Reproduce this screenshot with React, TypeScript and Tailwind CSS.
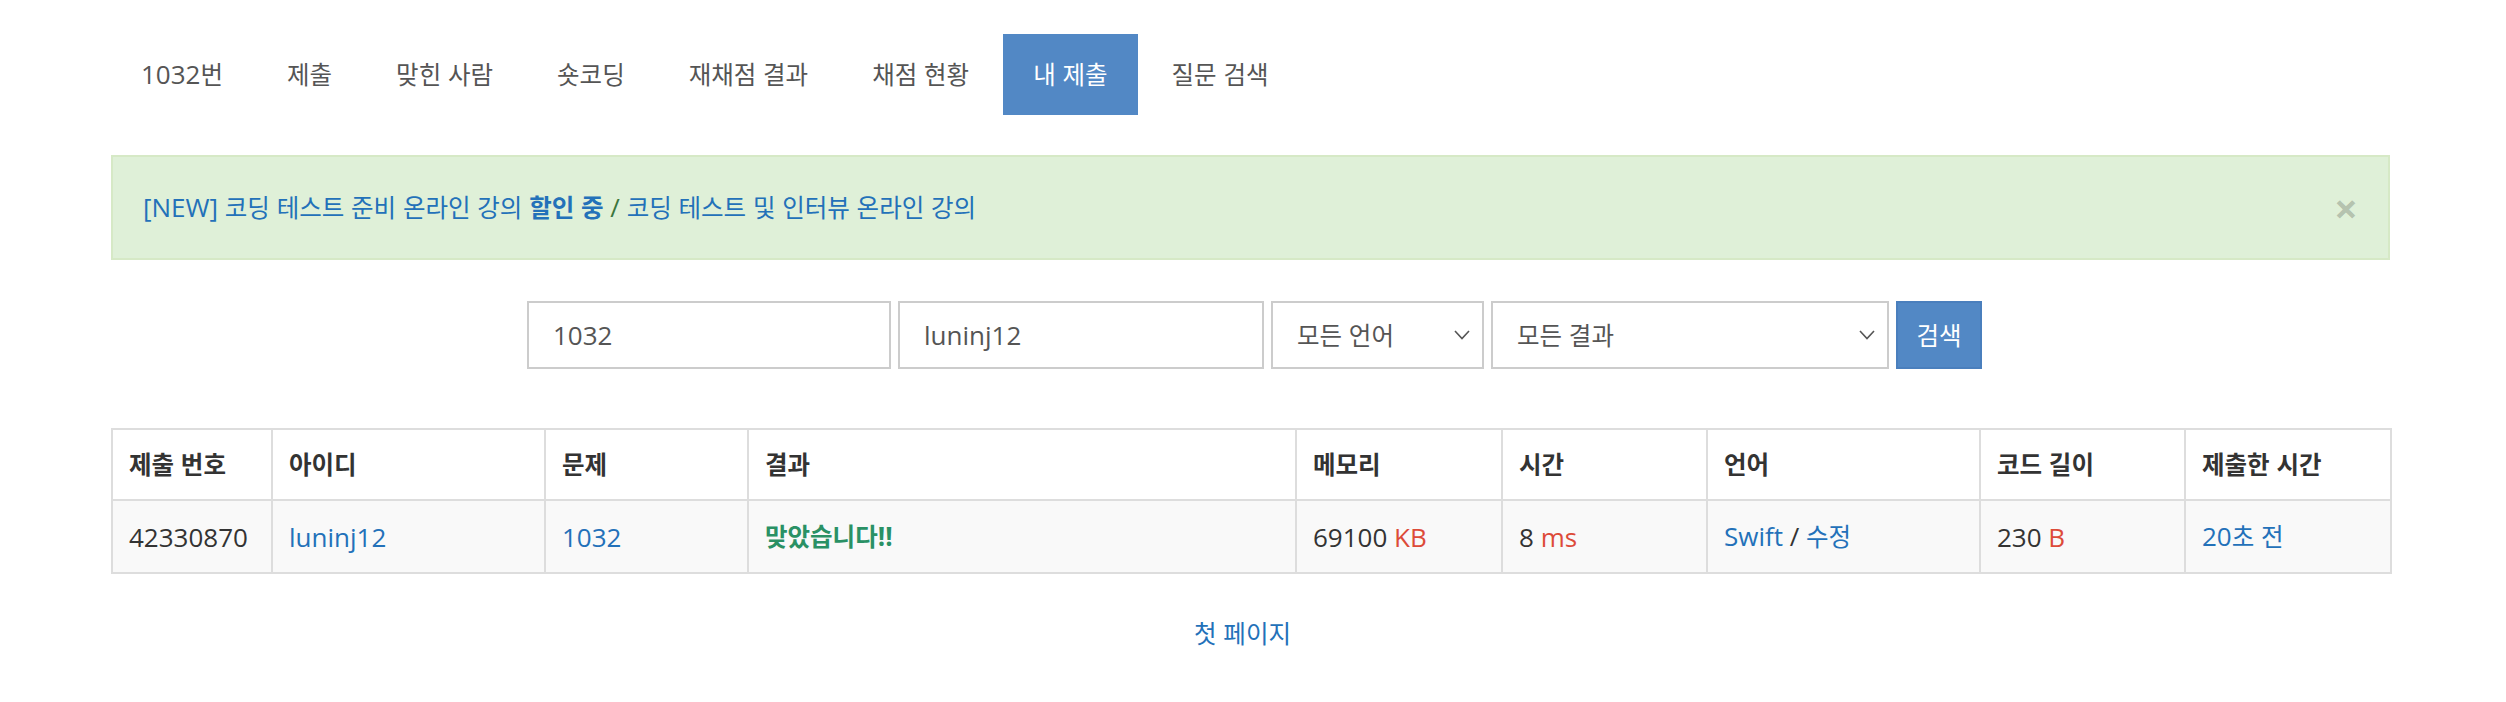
import React from "react";

const tabs = [
  { label: "1032번" },
  { label: "제출" },
  { label: "맞힌 사람" },
  { label: "숏코딩" },
  { label: "재채점 결과" },
  { label: "채점 현황" },
  { label: "내 제출", active: true },
  { label: "질문 검색" },
];

const columns = [
  { label: "제출 번호", w: "w-[160px]" },
  { label: "아이디", w: "w-[273px]" },
  { label: "문제", w: "w-[203px]" },
  { label: "결과", w: "w-[548px]" },
  { label: "메모리", w: "w-[206px]" },
  { label: "시간", w: "w-[205px]" },
  { label: "언어", w: "w-[273px]" },
  { label: "코드 길이", w: "w-[205px]" },
  { label: "제출한 시간", w: "w-[206px]" },
];

// hangul runs are set a bit smaller so their width matches the narrower korean face
function K({ children }: { children: string }) {
  const parts = children.split(/([\uAC00-\uD7A3]+)/);
  return (
    <>
      {parts.map((p, i) =>
        /[\uAC00-\uD7A3]/.test(p) ? (
          <span key={i} className="text-[24.5px]">
            {p}
          </span>
        ) : (
          p
        )
      )}
    </>
  );
}

function Chevron() {
  return (
    <svg width="16" height="10" viewBox="0 0 16 10" className="shrink-0">
      <polyline points="1,1 8,8.5 15,1" fill="none" stroke="#555" strokeWidth="1.6" />
    </svg>
  );
}

export default function App() {
  const th = "border-2 border-[#ddd] px-[16px] py-[14px] text-left";
  const cell = "border-2 border-[#ddd] px-[16px] py-[15px] text-left";
  const link = "text-[#2371b9]";
  const unit = "text-[#dd4b39]";

  return (
    <div className="min-h-[702px] bg-white font-['Open_Sans','Noto_Sans_CJK_KR',sans-serif] text-[26px] leading-[40px] text-[#333]">
      <div className="ml-[111px] w-[2279px] pt-[34px]">
        {/* tabs */}
        <ul className="flex gap-[4px]">
          {tabs.map((t) => (
            <li key={t.label}>
              <a
                className={
                  t.active
                    ? "block bg-[#5288c5] px-[30px] py-[20px] text-white"
                    : "block px-[30px] py-[20px] text-[#555]"
                }
              >
                <K>{t.label}</K>
              </a>
            </li>
          ))}
        </ul>

        {/* notice */}
        <div className="mt-[40px] flex items-center justify-between border-2 border-[#d6e9c6] bg-[#dff0d8] py-[30px] pl-[30px] pr-[30px] text-[#3c763d]">
          <div>
            <a className={link}>
              <K>[NEW] 코딩 테스트 준비 온라인 강의 </K>
              <b>
                <K>할인 중</K>
              </b>
            </a>{" "}
            /{" "}
            <a className={link}>
              <K>코딩 테스트 및 인터뷰 온라인 강의</K>
            </a>
          </div>
          <button className="text-[42px] font-bold leading-[40px] text-black/20">×</button>
        </div>

        {/* search form */}
        <form className="mt-[41px] flex justify-center gap-[7px] pl-[8px]">
          <input
            readOnly
            value="1032"
            className="h-[68px] w-[364px] border-2 border-[#ccc] px-[24px] text-[#555] outline-none"
          />
          <input
            readOnly
            value="luninj12"
            className="h-[68px] w-[366px] border-2 border-[#ccc] px-[24px] text-[#555] outline-none"
          />
          <div className="flex h-[68px] w-[213px] items-center justify-between border-2 border-[#ccc] pl-[24px] pr-[12px] text-[#555]">
            <span>
              <K>모든 언어</K>
            </span>
            <Chevron />
          </div>
          <div className="flex h-[68px] w-[398px] items-center justify-between border-2 border-[#ccc] pl-[24px] pr-[12px] text-[#555]">
            <span>
              <K>모든 결과</K>
            </span>
            <Chevron />
          </div>
          <button className="h-[68px] w-[86px] border-2 border-[#4a7fbd] bg-[#5288c5] text-white">
            <K>검색</K>
          </button>
        </form>

        {/* status table */}
        <table className="mt-[59px] w-[2279px] table-fixed border-collapse border-2 border-[#ddd]">
          <thead>
            <tr>
              {columns.map((c) => (
                <th key={c.label} className={`${th} ${c.w} font-bold`}>
                  <K>{c.label}</K>
                </th>
              ))}
            </tr>
          </thead>
          <tbody>
            <tr className="bg-[#f9f9f9]">
              <td className={cell}>42330870</td>
              <td className={cell}>
                <a className={link}>luninj12</a>
              </td>
              <td className={cell}>
                <a className={link}>1032</a>
              </td>
              <td className={cell}>
                <span className="font-bold text-[#2a9165]">
                  <K>맞았습니다!!</K>
                </span>
              </td>
              <td className={cell}>
                69100 <span className={unit}>KB</span>
              </td>
              <td className={cell}>
                8 <span className={unit}>ms</span>
              </td>
              <td className={cell}>
                <a className={link}>Swift</a> /{" "}
                <a className={link}>
                  <K>수정</K>
                </a>
              </td>
              <td className={cell}>
                230 <span className={unit}>B</span>
              </td>
              <td className={cell}>
                <a className={link}>
                  <K>20초 전</K>
                </a>
              </td>
            </tr>
          </tbody>
        </table>

        <div className="mt-[39px] pr-[16px] text-center">
          <a className={link}>
            <K>첫 페이지</K>
          </a>
        </div>
      </div>
    </div>
  );
}
